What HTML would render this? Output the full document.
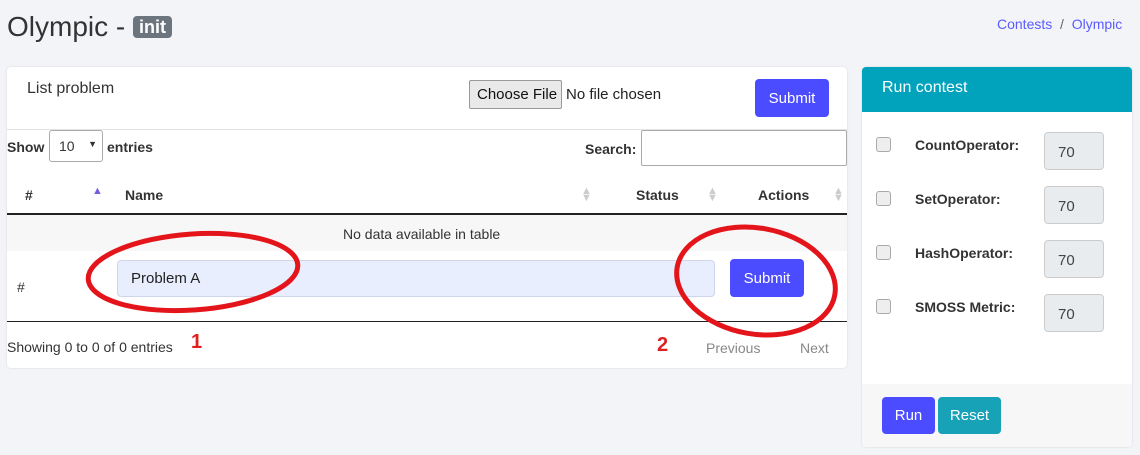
<!DOCTYPE html>
<html><head><meta charset="utf-8"><style>
*{box-sizing:border-box;margin:0;padding:0}
body{width:1140px;height:455px;background:#f3f4f8;font-family:"Liberation Sans",sans-serif;color:#333;position:relative;overflow:hidden;font-size:14px}
.a{position:absolute}
.card{background:#fff;border-radius:4px;box-shadow:0 0 2px rgba(0,0,0,.12)}
.btn{background:#4b4bff;color:#fff;border-radius:4px;font-size:15px;display:flex;align-items:center;justify-content:center}
b{font-weight:bold}
.chk{width:15px;height:15px;border:1px solid #aaa;border-radius:3px;background:#eee}
.inp{width:60px;height:38px;background:#e9ecef;border:1px solid #ccc;border-radius:4px;padding:11px 0 0 13px;font-size:15px;color:#444}
.sort{color:#ccc;font-size:11px;line-height:7px}
</style></head><body>
<div class="a" style="left:7px;top:11px;font-size:28px;color:#333">Olympic - <span style="background:#6c757d;color:#fff;font-size:18px;font-weight:bold;padding:1px 6px;border-radius:4px;vertical-align:3px">init</span></div>
<div class="a" style="left:997px;top:16px;font-size:14px;color:#5a5aff">Contests <span style="color:#666">&nbsp;/&nbsp;</span> Olympic</div>

<div class="a card" style="left:7px;top:67px;width:840px;height:301px"></div>
<div class="a" style="left:27px;top:80px;font-size:16px">List problem</div>
<div class="a" style="left:469px;top:80px;width:93px;height:29px;border:1px solid #999;background:#e9e9e9;border-radius:2px;font-size:15px;padding:5px 0 0 7px;color:#111">Choose File</div>
<div class="a" style="left:566px;top:86px;font-size:15px;color:#222">No file chosen</div>
<div class="a btn" style="left:755px;top:79px;width:74px;height:38px">Submit</div>
<div class="a" style="left:7px;top:129px;width:840px;height:1px;background:#e3e3e3"></div>
<div class="a" style="left:7px;top:139px;font-size:14px"><b>Show</b></div>
<div class="a" style="left:49px;top:130px;width:54px;height:32px;border:1px solid #aaa;border-radius:3px;padding:7px 0 0 9px;font-size:14px">10 <span style="position:absolute;right:5px;top:8px;font-size:9px">▼</span></div>
<div class="a" style="left:107px;top:139px"><b>entries</b></div>
<div class="a" style="left:585px;top:141px"><b>Search:</b></div>
<div class="a" style="left:641px;top:130px;width:206px;height:36px;border:1px solid #aaa;border-radius:2px"></div>
<div class="a" style="left:25px;top:187px"><b>#</b></div>
<div class="a" style="left:92px;top:185px;color:#7b5be0;font-size:11px">▲</div>
<div class="a" style="left:125px;top:187px"><b>Name</b></div>
<div class="a sort" style="left:581px;top:188px">▲<br>▼</div>
<div class="a" style="left:636px;top:187px"><b>Status</b></div>
<div class="a sort" style="left:707px;top:188px">▲<br>▼</div>
<div class="a" style="left:758px;top:187px"><b>Actions</b></div>
<div class="a sort" style="left:833px;top:188px">▲<br>▼</div>
<div class="a" style="left:7px;top:213px;width:840px;height:2px;background:#222"></div>
<div class="a" style="left:7px;top:215px;width:840px;height:36px;background:#f7f7f7"></div>
<div class="a" style="left:343px;top:226px">No data available in table</div>
<div class="a" style="left:17px;top:279px">#</div>
<div class="a" style="left:117px;top:260px;width:598px;height:37px;background:#e8eefe;border:1px solid #cfd6ea;border-radius:4px;padding:9px 0 0 13px;font-size:15px;color:#222">Problem A</div>
<div class="a btn" style="left:730px;top:259px;width:74px;height:38px">Submit</div>
<div class="a" style="left:7px;top:321px;width:840px;height:1px;background:#222"></div>
<div class="a" style="left:7px;top:339px">Showing 0 to 0 of 0 entries</div>
<div class="a" style="left:191px;top:331px;color:#e02020;font-weight:bold;font-size:20px">1</div>
<div class="a" style="left:657px;top:334px;color:#e02020;font-weight:bold;font-size:20px">2</div>
<div class="a" style="left:706px;top:340px;color:#888">Previous</div>
<div class="a" style="left:800px;top:340px;color:#888">Next</div>
<svg class="a" style="left:0;top:0" width="1140" height="455"><g fill="none" stroke="#e3151b" stroke-width="5"><ellipse cx="193" cy="272" rx="105" ry="38" transform="rotate(-4 193 272)"/><ellipse cx="756" cy="281" rx="80" ry="53" transform="rotate(10 756 281)"/></g></svg>

<div class="a card" style="left:862px;top:67px;width:270px;height:380px;overflow:hidden">
<div style="height:45px;background:#00a3bb;color:#fff;font-size:16px;padding:12px 0 0 20px">Run contest</div>
<div style="position:absolute;left:0;top:317px;width:270px;height:63px;background:#f7f7f7"></div>
</div>
<div class="a chk" style="left:876px;top:137px"></div><div class="a" style="left:915px;top:137px"><b>CountOperator:</b></div><div class="a inp" style="left:1044px;top:132px">70</div>
<div class="a chk" style="left:876px;top:191px"></div><div class="a" style="left:915px;top:191px"><b>SetOperator:</b></div><div class="a inp" style="left:1044px;top:186px">70</div>
<div class="a chk" style="left:876px;top:245px"></div><div class="a" style="left:915px;top:245px"><b>HashOperator:</b></div><div class="a inp" style="left:1044px;top:240px">70</div>
<div class="a chk" style="left:876px;top:299px"></div><div class="a" style="left:915px;top:299px"><b>SMOSS Metric:</b></div><div class="a inp" style="left:1044px;top:294px">70</div>
<div class="a btn" style="left:882px;top:397px;width:53px;height:37px">Run</div>
<div class="a btn" style="left:938px;top:397px;width:63px;height:37px;background:#17a2b8">Reset</div>
</body></html>
